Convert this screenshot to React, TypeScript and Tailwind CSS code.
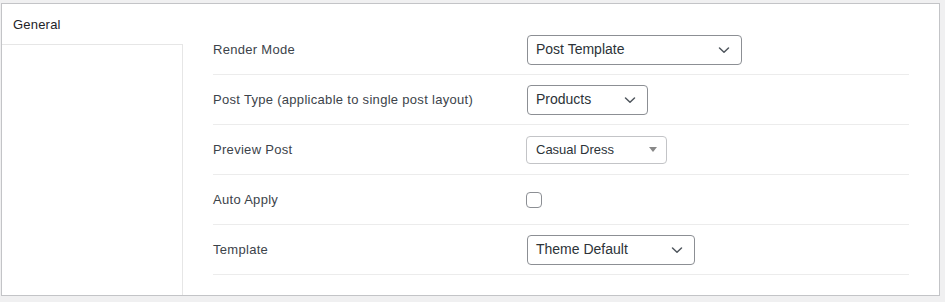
import React from 'react';

type Row = {
  label: string;
  control: React.ReactNode;
};

function Chevron() {
  return (
    <svg className="h-[10px] w-[12px]" viewBox="0 0 12 10" fill="none" aria-hidden="true">
      <path d="M1.5 3 6 7.2 10.5 3" stroke="#50575e" strokeWidth="1.5" strokeLinecap="round" strokeLinejoin="round" />
    </svg>
  );
}

// WP-style native select look
function Select({ value, width }: { value: string; width: string }) {
  return (
    <div
      className={`flex h-[30px] items-center justify-between rounded-[4px] border border-[#8c8f94] bg-white pl-[8px] pr-[11px] text-[14px] text-[#2c3338] ${width}`}
    >
      <span>{value}</span>
      <Chevron />
    </div>
  );
}

// select2-style box
function Select2({ value }: { value: string }) {
  return (
    <div className="-ml-px flex h-[28px] w-[141px] items-center justify-between rounded-[4px] border border-[#c3c4c7] bg-white pl-[9px] pr-[9px] text-[13px] text-[#2c3338]">
      <span>{value}</span>
      <span className="h-0 w-0 border-x-[4px] border-t-[5px] border-x-transparent border-t-[#888]" />
    </div>
  );
}

function Checkbox() {
  return <div className="-ml-px h-[16px] w-[16px] rounded-[4px] border border-[#8c8f94] bg-white" />;
}

const rows: Row[] = [
  { label: 'Render Mode', control: <Select value="Post Template" width="w-[215px]" /> },
  { label: 'Post Type (applicable to single post layout)', control: <Select value="Products" width="w-[121px]" /> },
  { label: 'Preview Post', control: <Select2 value="Casual Dress" /> },
  { label: 'Auto Apply', control: <Checkbox /> },
  { label: 'Template', control: <Select value="Theme Default" width="w-[168px]" /> },
];

export default function App() {
  return (
    <div className="h-[302px] w-full bg-[#f0f0f1] pt-[3px] font-['Liberation_Sans',Arial,sans-serif]">
      <div className="ml-px flex h-[293px] w-[939px] border border-[#c3c4c7] bg-white">
        {/* Tabs */}
        <div className="flex w-[181px] flex-col">
          <div className="h-[40px] pl-[11px] pt-[11px] text-[13px] tracking-[0.2px] text-[#1d2327]">General</div>
          <div className="flex-1 border-r border-t border-[#e6e6e6]" />
        </div>

        {/* Fields */}
        <div className="flex-1 pl-[30px] pr-[30px] pt-[21px]">
          {rows.map((row) => (
            <div key={row.label} className="flex h-[50px] items-center border-b border-[#ececec]">
              <div className="w-[314px] text-[13px] tracking-[0.3px] text-[#3c434a]">{row.label}</div>
              <div>{row.control}</div>
            </div>
          ))}
        </div>
      </div>
    </div>
  );
}
